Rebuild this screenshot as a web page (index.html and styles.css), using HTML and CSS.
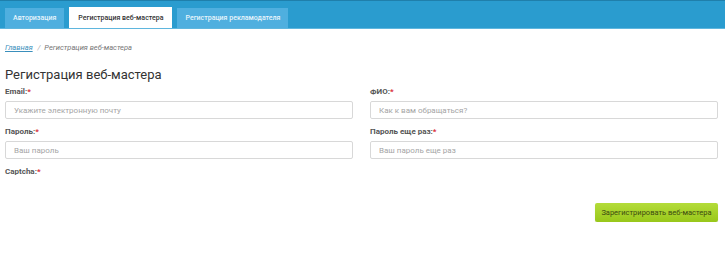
FILE: index.html
```html
<!DOCTYPE html>
<html lang="ru">
<head>
    <meta charset="UTF-8">
    <meta name="viewport" content="width=device-width, initial-scale=1.0">
    <title>Регистрация веб-мастера</title>
    <link rel="stylesheet" href="styles.css">
</head>
<body>

    <header class="topbar">
        <ul class="tabs">
            <li><a href="#">Авторизация</a></li>
            <li class="active"><a href="#">Регистрация веб-мастера</a></li>
            <li><a href="#">Регистрация рекламодателя</a></li>
        </ul>
    </header>

    <main class="content">
        <div class="breadcrumbs">
            <a href="#">Главная</a>
            <span class="sep">/</span>
            <span>Регистрация веб-мастера</span>
        </div>

        <h1>Регистрация веб-мастера</h1>

        <form class="reg-form" onsubmit="return false">
            <div class="grid">
                <div class="field">
                    <label for="email">Email:<span class="req">*</span></label>
                    <input type="text" id="email" placeholder="Укажите электронную почту">
                </div>
                <div class="field">
                    <label for="fio">ФИО:<span class="req">*</span></label>
                    <input type="text" id="fio" placeholder="Как к вам обращаться?">
                </div>
                <div class="field">
                    <label for="pass">Пароль:<span class="req">*</span></label>
                    <input type="password" id="pass" placeholder="Ваш пароль">
                </div>
                <div class="field">
                    <label for="pass2">Пароль еще раз:<span class="req">*</span></label>
                    <input type="password" id="pass2" placeholder="Ваш пароль еще раз">
                </div>
                <div class="field">
                    <label>Captcha:<span class="req">*</span></label>
                </div>
            </div>
            <div class="actions">
                <button type="submit">Зарегистрировать веб-мастера</button>
            </div>
        </form>
    </main>

</body>
</html>
```

FILE: styles.css
```css
* {
    margin: 0;
    padding: 0;
    box-sizing: border-box;
}

body {
    font-family: Roboto, Arial, sans-serif;
    background-color: #fff;
    color: #333;
}

.topbar {
    background-color: #2a9ccf;
    border-top: 1px solid #1f7fab;
    border-bottom: 1px solid #5fb6de;
    height: 29px;
    padding: 6px 5px 0;
}

.tabs {
    list-style-type: none;
    display: flex;
    align-items: flex-end;
    height: 100%;
    gap: 5px;
}

.tabs li a {
    display: block;
    height: 20px;
    line-height: 20px;
    padding: 0 8px;
    background-color: #4fafdf;
    color: #e8f5fc;
    font-size: 7px;
    font-weight: 500;
    text-decoration: none;
}

.tabs li.active a {
    height: 21px;
    line-height: 22px;
    background-color: #fff;
    color: #333;
    padding: 0 9px;
}

.content {
    padding: 0 7px 0 5px;
}

.breadcrumbs {
    margin-top: 14px;
    font-size: 7.5px;
    font-style: italic;
    color: #777;
}

.breadcrumbs a {
    color: #3a8fbc;
}

.breadcrumbs .sep {
    margin: 0 2px 0 3px;
    color: #aaa;
}

h1 {
    margin-top: 15px;
    font-size: 13px;
    font-weight: 400;
    color: #333;
    line-height: 16px;
}

.grid {
    display: grid;
    grid-template-columns: 1fr 1fr;
    column-gap: 17px;
    row-gap: 7px;
    margin-top: 3px;
}

.field label {
    display: block;
    font-size: 8px;
    font-weight: 700;
    color: #555;
    line-height: 12px;
    margin-bottom: 3px;
}

.req {
    color: #d9303a;
}

.field input {
    display: block;
    width: 100%;
    height: 18px;
    padding: 0 8px;
    border: 1px solid #d8d8d8;
    border-radius: 2px;
    font-family: Roboto, Arial, sans-serif;
    font-size: 8px;
    color: #333;
}

.field input::placeholder {
    color: #a5a5a5;
}

.actions {
    display: flex;
    justify-content: flex-end;
    margin-top: 22px;
}

.actions button {
    width: 123px;
    height: 19px;
    border: none;
    border-radius: 2px;
    background: linear-gradient(#b4dc3a, #98c71a);
    box-shadow: 0 1px 1px rgba(0, 0, 0, 0.15);
    color: #3c4a10;
    font-family: Roboto, Arial, sans-serif;
    font-size: 7.5px;
    cursor: pointer;
}
```
